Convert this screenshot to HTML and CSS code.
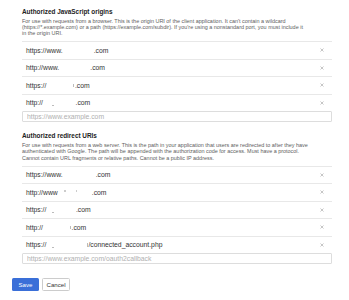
FILE: index.html
```html
<!DOCTYPE html>
<html lang="en">
<head>
    <meta charset="UTF-8">
    <meta name="viewport" content="width=device-width, initial-scale=1.0">
    <title>Client ID URIs</title>
    <link rel="stylesheet" href="styles.css">
</head>
<body>

    <div class="page">

        <!-- JavaScript origins -->
        <section class="uri-section">
            <h3 class="uri-title">Authorized JavaScript origins</h3>
            <p class="uri-help">For use with requests from a browser. This is the origin URI of the client application. It can't contain a wildcard<br>(https://*.example.com) or a path (https://example.com/subdir). If you're using a nonstandard port, you must include it<br>in the origin URI.</p>
            <ul class="uri-list">
                <li class="uri-row"><span class="uri-text">https://www.<span class="redact gap-31"></span>.com</span><button class="remove" title="Remove"><svg viewBox="0 0 4 4"><path d="M0.5 0.5L3.5 3.5M3.5 0.5L0.5 3.5"/></svg></button></li>
                <li class="uri-row"><span class="uri-text">http://www.<span class="redact gap-31"></span>.com</span><button class="remove" title="Remove"><svg viewBox="0 0 4 4"><path d="M0.5 0.5L3.5 3.5M3.5 0.5L0.5 3.5"/></svg></button></li>
                <li class="uri-row"><span class="uri-text">https://<span class="redact gap-27"></span><span class="speck"></span>.com</span><button class="remove" title="Remove"><svg viewBox="0 0 4 4"><path d="M0.5 0.5L3.5 3.5M3.5 0.5L0.5 3.5"/></svg></button></li>
                <li class="uri-row"><span class="uri-text">http://<span class="redact gap-9"></span><span class="dash"></span><span class="redact gap-22"></span>.com</span><button class="remove" title="Remove"><svg viewBox="0 0 4 4"><path d="M0.5 0.5L3.5 3.5M3.5 0.5L0.5 3.5"/></svg></button></li>
            </ul>
            <input class="uri-input" type="text" placeholder="https://www.example.com">
        </section>

        <!-- redirect URIs -->
        <section class="uri-section">
            <h3 class="uri-title">Authorized redirect URIs</h3>
            <p class="uri-help">For use with requests from a web server. This is the path in your application that users are redirected to after they have<br>authenticated with Google. The path will be appended with the authorization code for access. Must have a protocol.<br>Cannot contain URL fragments or relative paths. Cannot be a public IP address.</p>
            <ul class="uri-list">
                <li class="uri-row"><span class="uri-text">https://www.<span class="redact gap-33"></span>.com</span><button class="remove" title="Remove"><svg viewBox="0 0 4 4"><path d="M0.5 0.5L3.5 3.5M3.5 0.5L0.5 3.5"/></svg></button></li>
                <li class="uri-row"><span class="uri-text">http://www<span class="redact gap-6"></span><span class="tick"></span><span class="tick"></span><span class="redact gap-9"></span><span class="tick"></span><span class="redact gap-14"></span>.com</span><button class="remove" title="Remove"><svg viewBox="0 0 4 4"><path d="M0.5 0.5L3.5 3.5M3.5 0.5L0.5 3.5"/></svg></button></li>
                <li class="uri-row"><span class="uri-text">https://<span class="redact gap-6"></span><span class="dash"></span><span class="redact gap-22"></span>.com</span><button class="remove" title="Remove"><svg viewBox="0 0 4 4"><path d="M0.5 0.5L3.5 3.5M3.5 0.5L0.5 3.5"/></svg></button></li>
                <li class="uri-row"><span class="uri-text">http://<span class="redact gap-27"></span><span class="speck"></span>.com</span><button class="remove" title="Remove"><svg viewBox="0 0 4 4"><path d="M0.5 0.5L3.5 3.5M3.5 0.5L0.5 3.5"/></svg></button></li>
                <li class="uri-row"><span class="uri-text">https://<span class="redact gap-6"></span><span class="dash"></span><span class="redact gap-33"></span><span class="speck"></span>/connected_account.php</span><button class="remove" title="Remove"><svg viewBox="0 0 4 4"><path d="M0.5 0.5L3.5 3.5M3.5 0.5L0.5 3.5"/></svg></button></li>
            </ul>
            <input class="uri-input" type="text" placeholder="https://www.example.com/oauth2callback">
        </section>

        <div class="actions">
            <button class="btn btn-save">Save</button>
            <button class="btn btn-cancel">Cancel</button>
        </div>

    </div>

</body>
</html>
```

FILE: styles.css
```css
body {
    font-family: 'Liberation Sans', Arial, sans-serif;
    background-color: #fff;
    color: #333;
    margin: 0;
}

.page {
    padding: 8.5px 17px 0 22px;
}

.uri-section + .uri-section {
    margin-top: 11px;
}

.uri-title {
    margin: 0;
    font-size: 6.4px;
    line-height: 6px;
    font-weight: bold;
    color: #222;
}

.uri-help {
    margin: 3px 0 0;
    font-size: 5.45px;
    line-height: 6.2px;
    color: #606060;
    white-space: nowrap;
}

.uri-list {
    list-style: none;
    margin: 5px 0 0;
    padding: 0;
}

.uri-row {
    display: flex;
    align-items: center;
    justify-content: space-between;
    height: 17.5px;
    box-sizing: border-box;
    border-top: 1px solid #e8e8e8;
    padding: 0 8.5px 0 4px;
    font-size: 6.8px;
    color: #333;
}

.uri-text {
    display: flex;
    align-items: center;
    white-space: nowrap;
}

.redact {
    display: inline-block;
}

.gap-6 { width: 6px; }
.gap-9 { width: 9px; }
.gap-14 { width: 14px; }
.gap-22 { width: 22px; }
.gap-27 { width: 27px; }
.gap-31 { width: 31px; }
.gap-33 { width: 33px; }

/* leftovers of the blurred-out host names */
.speck {
    display: inline-block;
    width: 0.7px;
    height: 3.5px;
    margin-right: 0.8px;
    background-color: #bbb;
}

.dash {
    display: inline-block;
    width: 1.5px;
    height: 0.7px;
    margin-top: 4px;
    background-color: #bbb;
}

.tick {
    display: inline-block;
    width: 0.7px;
    height: 1.5px;
    margin: -3px 1px 0 0;
    background-color: #ccc;
}

.remove {
    display: flex;
    padding: 0;
    border: none;
    background: none;
    cursor: pointer;
}

.remove svg {
    width: 4px;
    height: 4px;
    stroke: #a0a0a0;
    stroke-width: 0.6;
    fill: none;
}

.uri-input {
    display: block;
    width: 100%;
    height: 11px;
    box-sizing: border-box;
    margin: 0;
    padding: 0 4px;
    border: 1px solid #ddd;
    border-radius: 1px;
    font-family: 'Liberation Sans', Arial, sans-serif;
    font-size: 6.8px;
    color: #333;
}

.uri-input::placeholder {
    color: #b0b0b0;
}

.actions {
    display: flex;
    gap: 3px;
    margin: 13.5px 0 0 -10px;
}

.btn {
    height: 13px;
    padding: 0;
    border-radius: 1.5px;
    font-family: 'Liberation Sans', Arial, sans-serif;
    font-size: 6.1px;
    cursor: pointer;
}

.btn-save {
    width: 27px;
    background-color: #3a6fd8;
    border: none;
    color: #fff;
}

.btn-cancel {
    width: 28px;
    background-color: #fff;
    border: 1px solid #ccc;
    color: #333;
}
```
